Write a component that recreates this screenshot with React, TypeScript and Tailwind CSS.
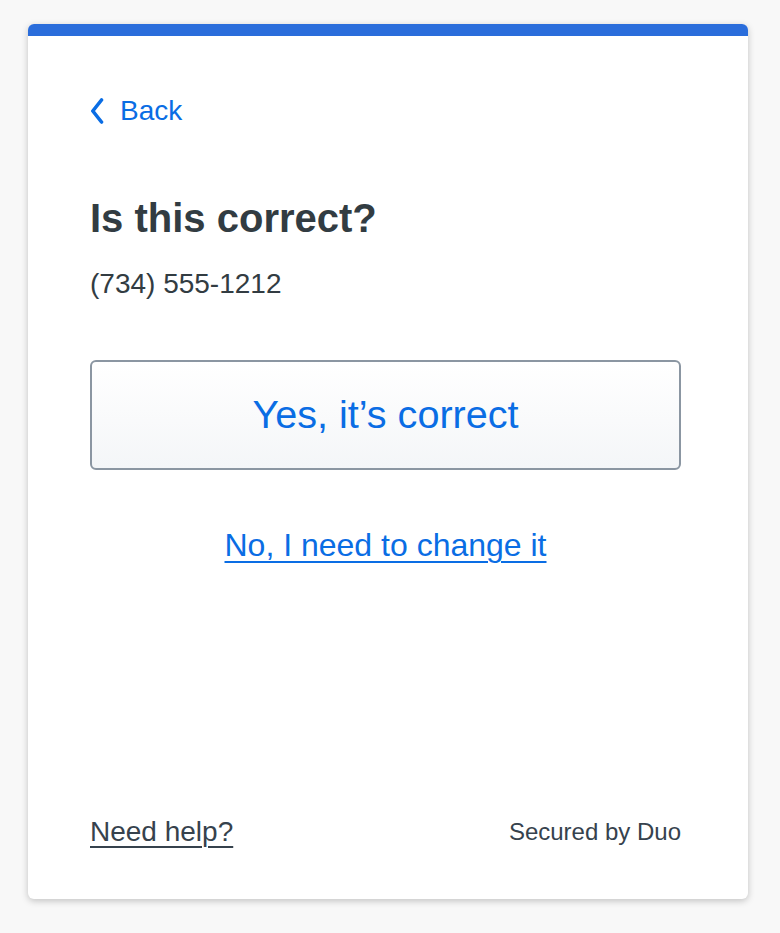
import React from 'react';

const font = { fontFamily: '"Liberation Sans", Arial, Helvetica, sans-serif' };

function ChevronLeft() {
  return (
    <svg width="14" height="26" viewBox="0 0 14 26" fill="none" aria-hidden="true">
      <path d="M11.5 2L2.8 13l8.7 11" stroke="currentColor" strokeWidth="3.6" strokeLinecap="round" strokeLinejoin="round" />
    </svg>
  );
}

export default function App() {
  return (
    <div className="min-h-screen bg-[#f8f8f8] pt-[24px] pl-[28px]" style={font}>
      <div className="w-[720px] h-[875px] bg-white rounded-[6px] overflow-hidden shadow-[0_2px_7px_rgba(0,0,0,0.22)] flex flex-col">
        <div className="h-[12px] bg-[#2a6ddb] shrink-0" />
        <div className="flex-1 flex flex-col pl-[62px] pr-[67px] pt-[59px] pb-[49px]">
          <button className="flex items-center gap-[16px] text-[#0a6de4] text-[28px] leading-[32px] self-start">
            <ChevronLeft />
            <span>Back</span>
          </button>

          <h1 className="mt-[67px] text-[40px] leading-[48px] font-bold text-[#323c42]">Is this correct?</h1>
          <p className="mt-[24px] text-[28px] leading-[36px] text-[#323c42]">(734) 555-1212</p>

          <button className="mt-[58px] h-[110px] w-full rounded-[6px] border-2 border-[#8b96a2] bg-gradient-to-b from-white to-[#f4f6f8] text-[#0a6de4] text-[39.6px] leading-none">
            Yes, it’s correct
          </button>

          <div className="mt-[55px] flex justify-center">
            <a href="#" className="text-[32px] leading-[40px] text-[#0a6de4] underline decoration-[1.5px] underline-offset-[5px]">
              No, I need to change it
            </a>
          </div>

          <div className="mt-auto flex items-center justify-between">
            <a href="#" className="text-[28px] leading-[36px] text-[#36424d] underline decoration-[1.5px] underline-offset-[5px]">
              Need help?
            </a>
            <span className="text-[24px] leading-[36px] text-[#36424d]">Secured by Duo</span>
          </div>
        </div>
      </div>
    </div>
  );
}
